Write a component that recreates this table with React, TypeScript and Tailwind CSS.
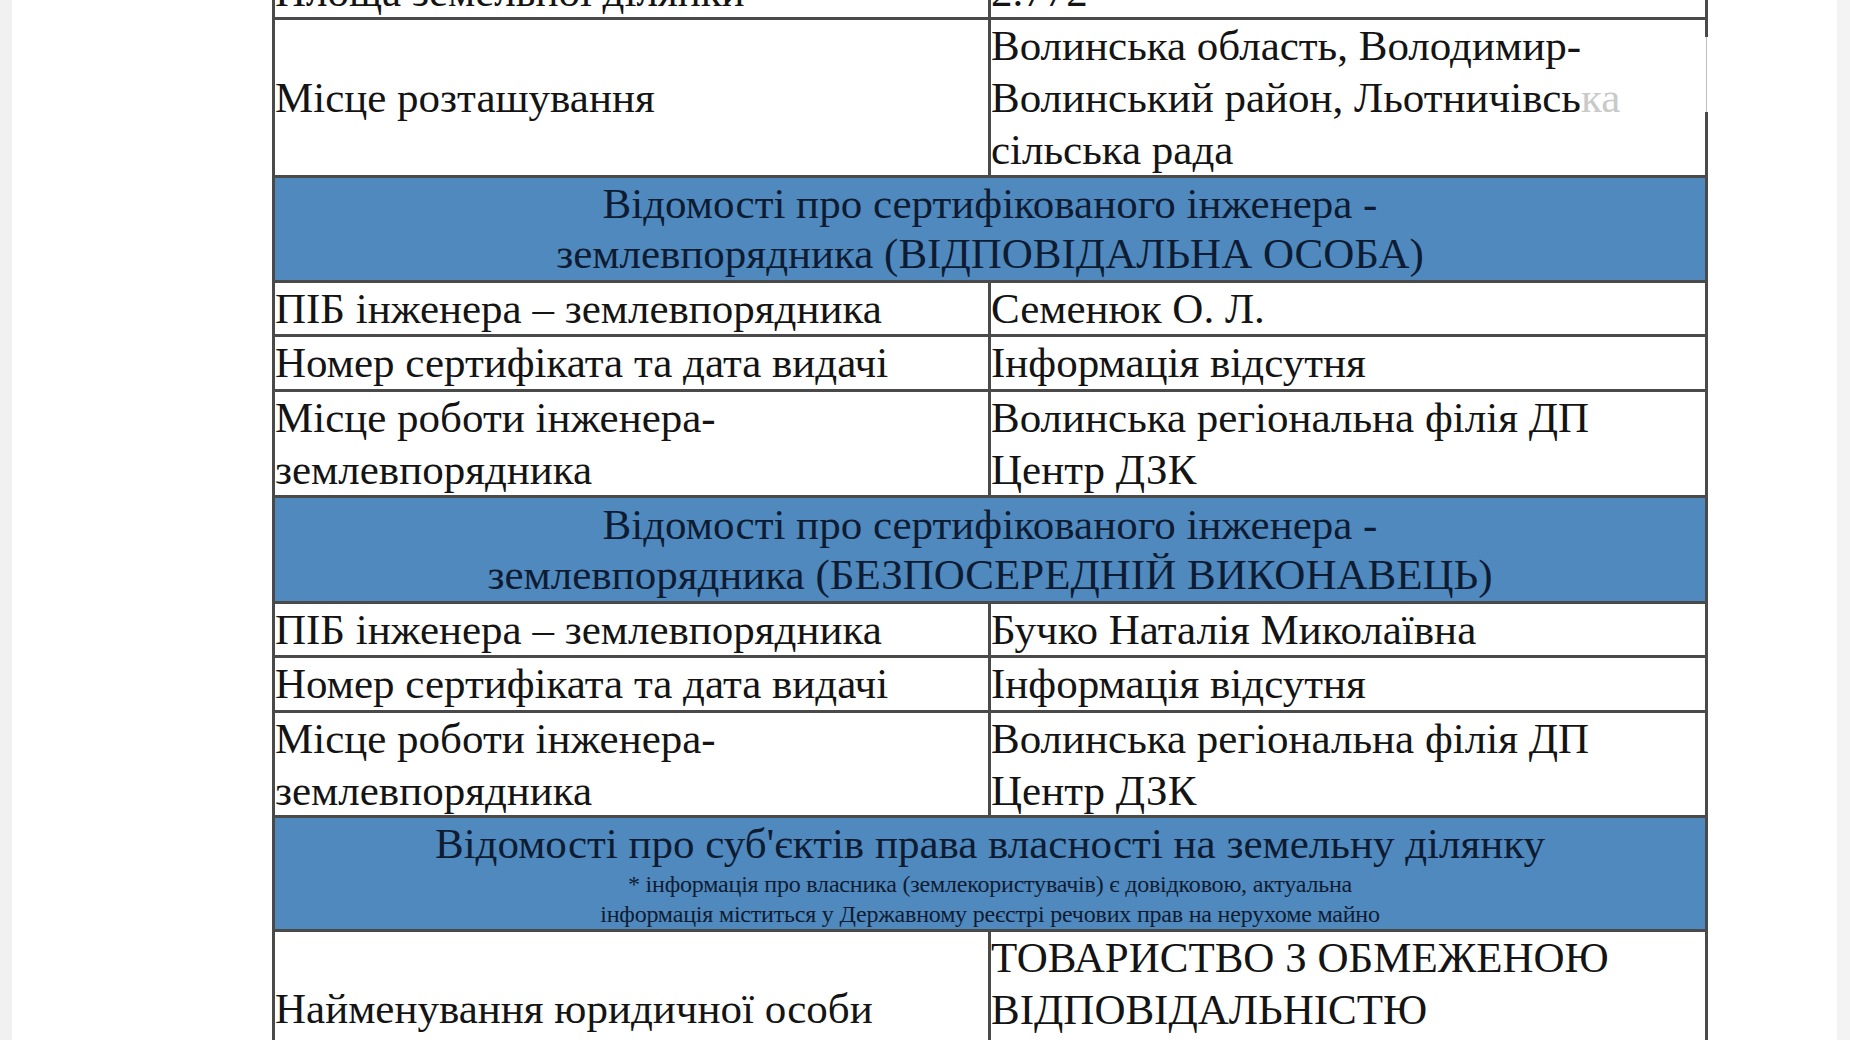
import React from "react";

type Row =
  | { kind: "pair"; label: string; value: React.ReactNode; h: string; labelCenter?: boolean }
  | { kind: "head"; lines: string[]; note?: string[]; h: string };

const serif = "font-['Liberation_Serif','Times_New_Roman',serif]";

const rows: Row[] = [
  { kind: "pair", label: "Площа земельної ділянки", value: "2.772", h: "h-[54px]" },
  {
    kind: "pair",
    label: "Місце розташування",
    labelCenter: true,
    value: (
      <>
        Волинська область, Володимир-
        <br />
        Волинський район, Льотничівсь<span className="text-[#c9c9c9]">ка</span>
        <br />
        сільська рада
      </>
    ),
    h: "h-[158px]",
  },
  {
    kind: "head",
    lines: ["Відомості про сертифікованого інженера -", "землевпорядника (ВІДПОВІДАЛЬНА ОСОБА)"],
    h: "h-[105px]",
  },
  { kind: "pair", label: "ПІБ інженера – землевпорядника", value: "Семенюк О. Л.", h: "h-[54px]" },
  { kind: "pair", label: "Номер сертифіката та дата видачі", value: "Інформація відсутня", h: "h-[55px]" },
  {
    kind: "pair",
    label: "Місце роботи інженера-\nземлевпорядника",
    value: "Волинська регіональна філія ДП\nЦентр ДЗК",
    h: "h-[106px]",
  },
  {
    kind: "head",
    lines: ["Відомості про сертифікованого інженера -", "землевпорядника (БЕЗПОСЕРЕДНІЙ ВИКОНАВЕЦЬ)"],
    h: "h-[106px]",
  },
  { kind: "pair", label: "ПІБ інженера – землевпорядника", value: "Бучко Наталія Миколаївна", h: "h-[54px]" },
  { kind: "pair", label: "Номер сертифіката та дата видачі", value: "Інформація відсутня", h: "h-[55px]" },
  {
    kind: "pair",
    label: "Місце роботи інженера-\nземлевпорядника",
    value: "Волинська регіональна філія ДП\nЦентр ДЗК",
    h: "h-[105px]",
  },
  {
    kind: "head",
    lines: ["Відомості про суб'єктів права власності на земельну ділянку"],
    note: [
      "* інформація про власника (землекористувачів) є довідковою, актуальна",
      "інформація міститься у Державному реєстрі речових прав на нерухоме майно",
    ],
    h: "h-[114px]",
  },
  {
    kind: "pair",
    label: "Найменування юридичної особи",
    labelCenter: true,
    value: "ТОВАРИСТВО З ОБМЕЖЕНОЮ\nВІДПОВІДАЛЬНІСТЮ",
    h: "h-[157px]",
  },
];

function TableRow({ row, index }: { row: Row; index: number }) {
  if (row.kind === "head") {
    return (
      <div
        className={`${row.h} flex flex-col items-center justify-center border-b-[3px] border-[#4a4a4a] bg-[#5089bd] text-center text-[#0e1c33]`}
      >
        {row.lines.map((l) => (
          <div key={l} className="text-[43px] leading-[50px]">
            {l}
          </div>
        ))}
        {row.note?.map((l) => (
          <div key={l} className="text-[24px] leading-[30px] tracking-[-0.2px]">
            {l}
          </div>
        ))}
      </div>
    );
  }

  return (
    <div className={`${row.h} relative flex border-b-[3px] border-[#4a4a4a]`}>
      <div
        className={`flex w-[716px] shrink-0 whitespace-pre-line border-r-[3px] border-[#4a4a4a] ${
          row.labelCenter ? "items-center" : "items-start"
        }`}
      >
        <div>{row.label}</div>
      </div>
      <div className="flex-1 whitespace-pre-line">{row.value}</div>
      {index === 1 && (
        <div className="absolute right-[-3px] top-[17px] flex h-[75px] w-[3px] justify-center bg-white">
          <div className="w-px bg-[#bdbdbd]" />
        </div>
      )}
    </div>
  );
}

export default function App() {
  return (
    <div className={`flex h-[1040px] w-[1850px] overflow-hidden bg-white ${serif}`}>
      <div className="w-[12px] shrink-0 bg-[#f1f1f1]" />
      <div className="flex-1 pl-[260px]">
        <div className="-mt-[34px] w-[1436px] border-x-[3px] border-[#4a4a4a] text-[43px] leading-[52px] text-[#141414]">
          {rows.map((r, i) => (
            <TableRow key={i} row={r} index={i} />
          ))}
        </div>
      </div>
      <div className="w-[13px] shrink-0 bg-[#f3f3f3]" />
    </div>
  );
}
